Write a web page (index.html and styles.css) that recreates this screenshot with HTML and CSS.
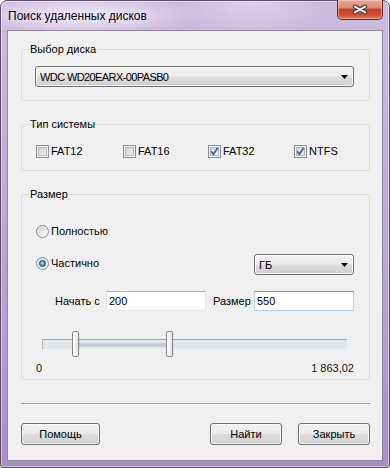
FILE: index.html
```html
<!DOCTYPE html>
<html lang="ru">
<head>
<meta charset="utf-8">
<title>Поиск удаленных дисков</title>
<link rel="stylesheet" href="styles.css">
</head>
<body>
<div class="window">
  <div class="titlebar">
    <span class="title">Поиск удаленных дисков</span>
    <button class="close" type="button" aria-label="Закрыть">
      <svg width="46" height="19" viewBox="0 0 46 19">
        <path d="M17.5 7.5 L28.5 13.5 M28.5 7.5 L17.5 13.5" stroke="#3b2a2a" stroke-width="4.2" stroke-linecap="round" fill="none"/>
        <path d="M17.5 7.5 L28.5 13.5 M28.5 7.5 L17.5 13.5" stroke="#ffffff" stroke-width="2.2" stroke-linecap="round" fill="none"/>
      </svg>
    </button>
  </div>
  <div class="client">
    <fieldset class="group">
      <legend>Выбор диска</legend>
      <div class="gb-body body-disk">
        <div class="combo combo-disk">
          <span class="combo-text disk-name">WDC WD20EARX-00PASB0</span>
          <svg class="arrow" width="7" height="4" viewBox="0 0 7 4"><polygon points="0,0 7,0 3.5,4" fill="#000"/></svg>
        </div>
      </div>
    </fieldset>

    <fieldset class="group group-fs">
      <legend>Тип системы</legend>
      <div class="gb-body body-fs">
        <label class="check"><span class="box"></span>FAT12</label>
        <label class="check"><span class="box"></span>FAT16</label>
        <label class="check"><span class="box"><svg width="11" height="11" viewBox="0 0 11 11"><path d="M2.2 5.2 L4.4 8.2 L8.8 1.8" stroke="#4a62a3" stroke-width="1.8" fill="none"/></svg></span>FAT32</label>
        <label class="check"><span class="box"><svg width="11" height="11" viewBox="0 0 11 11"><path d="M2.2 5.2 L4.4 8.2 L8.8 1.8" stroke="#4a62a3" stroke-width="1.8" fill="none"/></svg></span>NTFS</label>
      </div>
    </fieldset>

    <fieldset class="group group-size">
      <legend>Размер</legend>
      <div class="gb-body body-size">
        <label class="radio-label"><span class="radio"></span>Полностью</label>
        <div class="row-part">
          <label class="radio-label part"><span class="radio"><span class="dot"></span></span>Частично</label>
          <div class="combo combo-unit">
            <span class="combo-text">ГБ</span>
            <svg class="arrow" width="7" height="4" viewBox="0 0 7 4"><polygon points="0,0 7,0 3.5,4" fill="#000"/></svg>
          </div>
        </div>
        <div class="inputs-row">
          <span class="field-label">Начать с</span>
          <span class="textbox">200</span>
          <span class="field-label label2">Размер</span>
          <span class="textbox hover">550</span>
        </div>
        <div class="slider">
          <div class="track"><div class="range" style="left:35px;width:88px"></div></div>
          <span class="thumb" style="left:30px"></span>
          <span class="thumb" style="left:124px"></span>
        </div>
        <div class="scale"><span>0</span><span>1 863,02</span></div>
      </div>
    </fieldset>

    <div class="sep"></div>

    <div class="buttons">
      <button class="btn btn-help" type="button">Помощь</button>
      <span class="spacer"></span>
      <button class="btn" type="button">Найти</button>
      <button class="btn" type="button">Закрыть</button>
    </div>
  </div>
</div>
</body>
</html>
```

FILE: styles.css
```css
html, body {
  margin: 0;
  padding: 0;
  background: #ffffff;
}

body {
  font-family: "Liberation Sans", Arial, sans-serif;
  font-size: 11px;
  color: #000;
}

.window {
  width: 390px;
  height: 468px;
  box-sizing: border-box;
  border: 1px solid #5c5069;
  border-radius: 7px 7px 3px 3px;
  padding: 0 6px 6px 6px;
  display: flex;
  flex-direction: column;
  background:
    radial-gradient(ellipse 115px 20px at 80px 14px, rgba(243, 238, 248, 0.9), rgba(243, 238, 248, 0) 100%),
    radial-gradient(ellipse 70px 30px at 250px 4px, rgba(226, 215, 238, 0.7), rgba(226, 215, 238, 0) 100%),
    linear-gradient(180deg, #cdbce0 0%, #c2aed8 35%, #b6a0cf 70%, #a68fc4 100%);
  box-shadow: inset 0 0 0 1px rgba(255, 255, 255, 0.45);
}

.titlebar {
  height: 29px;
  display: flex;
  justify-content: space-between;
  align-items: flex-start;
}

.title {
  margin: 8px 0 0 1px;
  font-size: 12px;
  line-height: 14px;
  color: #000;
  text-shadow: 0 0 4px #f3eef8, 0 0 8px #f3eef8;
}

.close {
  margin: -1px 0 0 0;
  padding: 0;
  width: 46px;
  height: 20px;
  box-sizing: border-box;
  border: 1px solid #6d2a20;
  border-top: none;
  border-radius: 0 0 5px 5px;
  background: linear-gradient(180deg, #e9ab9b 0%, #dc8b76 40%, #c4432a 50%, #c94a30 75%, #e27c5e 100%);
  box-shadow: inset 0 0 0 1px rgba(255, 220, 210, 0.5);
  display: flex;
  align-items: flex-start;
  justify-content: center;
}

.close svg {
  display: block;
  margin-top: -1px;
}

.client {
  height: 431px;
  box-sizing: border-box;
  border: 1px solid #8d8599;
  background: #f0f0f0;
  padding: 11px 12px 0 13px;
  display: flex;
  flex-direction: column;
}

.group {
  margin: 0;
  padding: 0;
  min-width: 0;
  border: 1px solid #d5dfe5;
  border-radius: 3px;
}

.group legend {
  margin-left: 7px;
  padding: 0 1px;
  font-size: 11px;
  line-height: 14px;
}

.group-fs,
.group-size {
  margin-top: 16px;
}

.gb-body {
  display: flex;
}

.body-disk {
  padding: 10px 15px 13px 13px;
}

.combo {
  height: 21px;
  box-sizing: border-box;
  border: 1px solid #707070;
  border-radius: 3px;
  background: linear-gradient(180deg, #f2f2f2 0%, #ebebeb 48%, #dddddd 52%, #cfcfcf 100%);
  box-shadow: inset 0 0 0 1px rgba(252, 252, 252, 0.8);
  display: flex;
  align-items: center;
  justify-content: space-between;
  padding: 0 5px 0 4px;
}

.combo-disk {
  flex: 1;
}

.combo-text {
  line-height: 18px;
  white-space: nowrap;
}

.disk-name {
  letter-spacing: -0.6px;
}

.arrow {
  display: block;
}

.body-fs {
  padding: 14px 10px 12px 14px;
  display: grid;
  grid-template-columns: 87px 85px 86px auto;
}

.check {
  display: flex;
  align-items: center;
  height: 13px;
  line-height: 13px;
}

.box {
  width: 13px;
  height: 13px;
  box-sizing: border-box;
  border: 1px solid #8e8f8f;
  background: linear-gradient(135deg, #c8ccd2 0%, #e2e4e7 55%, #f7f7f7 100%);
  box-shadow: inset 0 0 0 1px #f4f4f4, inset 0 0 0 2px #b3b8be;
  margin-right: 2px;
  flex: none;
}

.box svg {
  display: block;
}

.body-size {
  padding: 24px 15px 4px 14px;
  flex-direction: column;
}

.radio-label {
  display: flex;
  align-items: center;
  height: 13px;
  line-height: 13px;
}

.radio {
  width: 13px;
  height: 13px;
  box-sizing: border-box;
  border-radius: 50%;
  border: 1px solid #8e8f8f;
  background: radial-gradient(circle at 65% 65%, #f6f6f6 0%, #dcdfe2 45%, #c3c7cc 100%);
  box-shadow: inset 0 0 0 1px #f4f4f4;
  margin-right: 2px;
  display: flex;
  align-items: center;
  justify-content: center;
  flex: none;
}

.dot {
  width: 5px;
  height: 5px;
  border-radius: 50%;
  border: 1px solid #17497a;
  background: radial-gradient(circle at 45% 40%, #b8e4fb 0%, #4fa3dc 45%, #1a62a6 100%);
}

.row-part {
  margin-top: 16px;
  display: flex;
  justify-content: space-between;
  align-items: flex-start;
}

.part {
  margin-top: 3px;
}

.combo-unit {
  width: 100px;
}

.inputs-row {
  margin-top: 16px;
  padding-left: 19px;
  display: grid;
  grid-template-columns: 51px 100px 48px 100px;
  align-items: center;
}

.field-label {
  line-height: 14px;
  white-space: nowrap;
}

.label2 {
  padding-left: 7px;
}

.textbox {
  height: 20px;
  box-sizing: border-box;
  border: 1px solid #e2e3ea;
  border-top-color: #abadb3;
  border-bottom-color: #e3e9ef;
  background: #fff;
  padding: 0 2px;
  line-height: 18px;
}

.textbox.hover {
  border-color: #b7d3ec;
  border-top-color: #5d97c8;
}

.slider {
  position: relative;
  height: 26px;
  margin: 20px 7px 0 6px;
}

.track {
  position: relative;
  margin-top: 8px;
  height: 11px;
  box-sizing: border-box;
  border-top: 1px solid #a3a3a3;
  border-left: 1px solid #b7b7b7;
  border-bottom: 1px solid #f2f2f2;
  background: #e4e7e9;
}

.range {
  position: absolute;
  top: 3px;
  height: 4px;
  background: #bfcdda;
}

.thumb {
  position: absolute;
  top: 0;
  width: 7px;
  height: 26px;
  box-sizing: border-box;
  border: 1px solid #8a8a8a;
  border-radius: 2px;
  background: linear-gradient(90deg, #ffffff 0%, #f4f4f4 50%, #dedede 100%);
  box-shadow: 1px 0 0 rgba(0, 0, 0, 0.06);
}

.scale {
  margin-top: 4px;
  display: flex;
  justify-content: space-between;
  line-height: 14px;
  color: #1b1320;
}

.sep {
  margin-top: 23px;
  height: 1px;
  border-top: 1px solid #a0a0a0;
  background: #ffffff;
  margin-right: 0;
}

.buttons {
  margin-top: 18px;
  display: flex;
  gap: 16px;
}

.spacer {
  flex: 1;
}

.btn {
  width: 72px;
  height: 22px;
  box-sizing: border-box;
  margin: 0;
  padding: 0;
  border: 1px solid #707070;
  border-radius: 3px;
  background: linear-gradient(180deg, #f2f2f2 0%, #ebebeb 48%, #dddddd 52%, #cfcfcf 100%);
  box-shadow: inset 0 0 0 1px rgba(252, 252, 252, 0.85);
  font-family: "Liberation Sans", Arial, sans-serif;
  font-size: 11px;
  line-height: 20px;
  color: #000;
  text-align: center;
}

.btn-help {
  width: 79px;
}
```
